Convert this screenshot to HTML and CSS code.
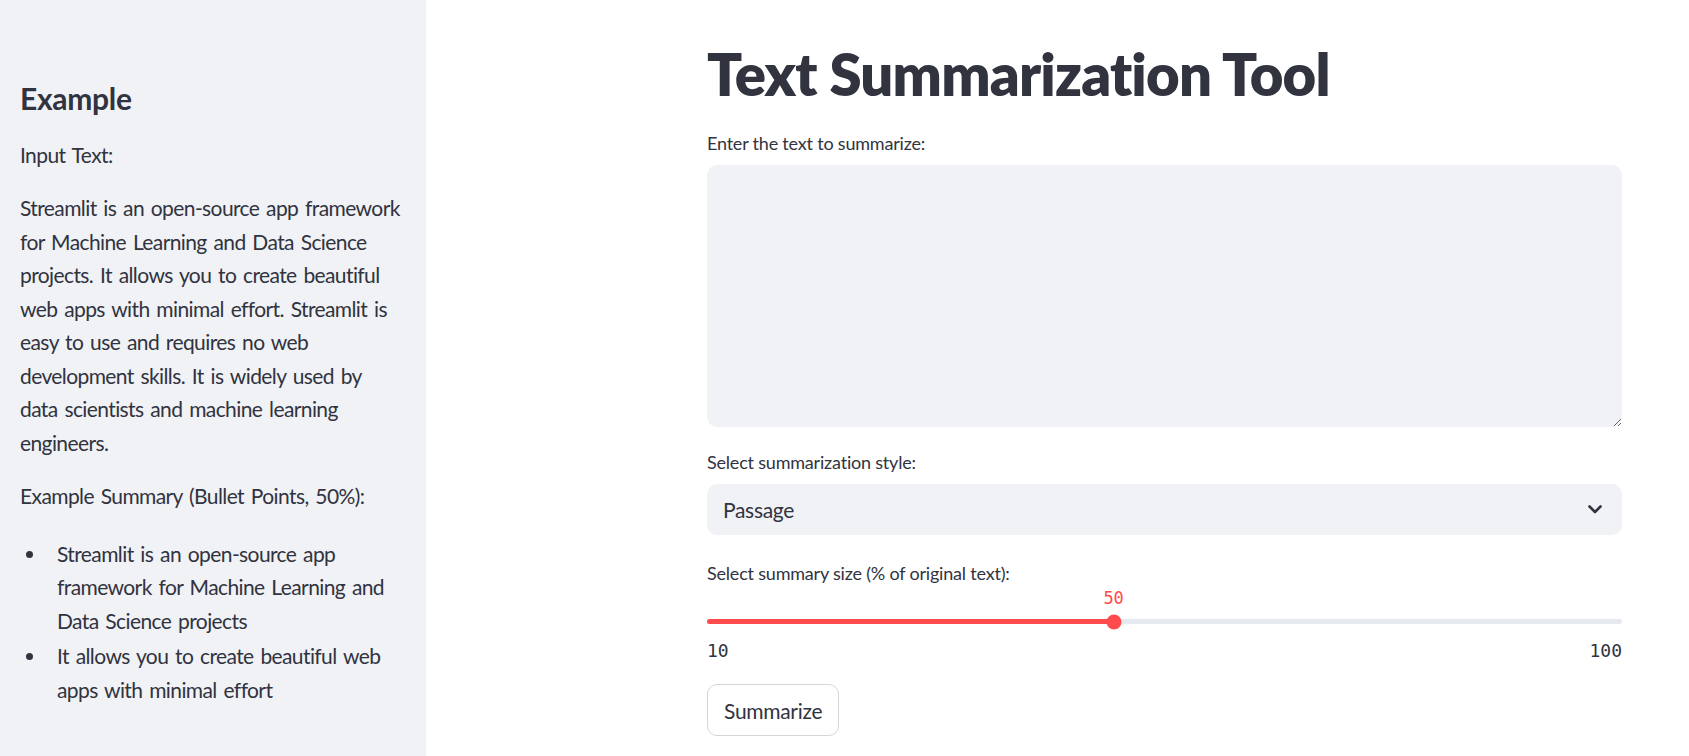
FILE: index.html
```html
<!DOCTYPE html>
<html lang="en">
<head>
<meta charset="utf-8">
<title>Text Summarization Tool</title>
<link rel="stylesheet" href="styles.css">
</head>
<body>
<div class="app">
  <aside class="sidebar">
    <h3 class="side-title">Example</h3>
    <p>Input Text:</p>
    <p>Streamlit is an open-source app framework for Machine Learning and Data Science projects. It allows you to create beautiful web apps with minimal effort. Streamlit is easy to use and requires no web development skills. It is widely used by data scientists and machine learning engineers.</p>
    <p>Example Summary (Bullet Points, 50%):</p>
    <ul class="bullets">
      <li>Streamlit is an open-source app framework for Machine Learning and Data Science projects</li>
      <li>It allows you to create beautiful web apps with minimal effort</li>
    </ul>
  </aside>
  <main class="main">
    <div class="block">
      <h1 class="title">Text Summarization Tool</h1>
      <label class="label">Enter the text to summarize:</label>
      <textarea class="textarea"></textarea>
      <label class="label label-select">Select summarization style:</label>
      <div class="select">
        <span>Passage</span>
        <svg class="chev" width="14" height="9" viewBox="0 0 14 9"><path d="M1.5 1.5 L7 7 L12.5 1.5" fill="none" stroke="#31333f" stroke-width="2.6" stroke-linecap="round" stroke-linejoin="round"/></svg>
      </div>
      <label class="label label-slider">Select summary size (% of original text):</label>
      <div class="slider">
        <div class="slider-value-row"><span class="slider-value" style="left: 44.44%">50</span></div>
        <div class="track">
          <div class="fill" style="width: 44.44%"></div>
          <div class="thumb" style="left: 44.44%"></div>
        </div>
        <div class="ticks"><span>10</span><span>100</span></div>
      </div>
      <button class="btn" type="button">Summarize</button>
    </div>
  </main>
</div>
</body>
</html>
```
FILE: styles.css
```css
* { box-sizing: border-box; }
html, body { margin: 0; padding: 0; }
body {
  font-family: "Lato", "Roboto", sans-serif;
  color: #31333f;
  background: #ffffff;
}
.app {
  display: flex;
  height: 756px;
  overflow: hidden;
}
.sidebar {
  width: 426px;
  flex: 0 0 426px;
  background: #f0f2f6;
  padding: 76px 21.5px 0 20px;
  font-size: 21px;
  line-height: 33.5px;
  letter-spacing: -0.6px;
  word-spacing: 2px;
}
.side-title {
  font-size: 30px;
  font-weight: 700;
  line-height: 44px;
  margin: 0 0 17.5px 0;
  letter-spacing: -0.3px;
  word-spacing: 0;
}
.sidebar p { margin: 0 0 20px 0; }
.bullets {
  list-style: none;
  margin: 24px 0 0 0;
  padding-left: 37px;
}
.bullets li {
  position: relative;
  margin-bottom: 2px;
}
.bullets li::before {
  content: "";
  position: absolute;
  left: -31px;
  top: 14px;
  width: 7px;
  height: 7px;
  border-radius: 50%;
  background: #31333f;
}
.main {
  flex: 1;
  min-width: 0;
}
.block {
  width: 915px;
  margin-left: 281px;
  padding-top: 38px;
}
.title {
  font-size: 58px;
  font-weight: 800;
  line-height: 72px;
  margin: 0 0 21px 0;
  letter-spacing: -0.8px;
}
.label {
  display: block;
  font-size: 18px;
  line-height: 24px;
  margin-bottom: 10px;
  letter-spacing: -0.2px;
}
.textarea {
  display: block;
  width: 100%;
  height: 262px;
  margin-top: 2px;
  background: #f0f2f6;
  border: none;
  border-radius: 10px;
  resize: vertical;
  outline: none;
  font-family: inherit;
  font-size: 21px;
  padding: 16px;
}
.label-select { margin-top: 23px; }
.select {
  height: 51px;
  background: #f0f2f6;
  border-radius: 10px;
  display: flex;
  align-items: center;
  justify-content: space-between;
  padding: 0 20px 0 16px;
  font-size: 21px;
  letter-spacing: -0.3px;
}
.label-slider { margin-top: 26px; margin-bottom: 2px; }
.slider { position: relative; }
.slider-value-row {
  position: relative;
  height: 26px;
}
.slider-value {
  position: absolute;
  top: 0;
  transform: translateX(-50%);
  color: #ff4b4b;
  font-family: "DejaVu Sans Mono", "Liberation Mono", monospace;
  font-size: 17px;
  line-height: 22px;
}
.track {
  position: relative;
  height: 5px;
  background: #e6e9ef;
  border-radius: 3px;
  margin-top: 6px;
}
.fill {
  height: 100%;
  background: #ff4b4b;
  border-radius: 3px;
}
.thumb {
  position: absolute;
  top: 50%;
  width: 15px;
  height: 15px;
  border-radius: 50%;
  background: #ff4b4b;
  transform: translate(-50%, -50%);
}
.ticks {
  display: flex;
  justify-content: space-between;
  font-family: "DejaVu Sans Mono", "Liberation Mono", monospace;
  font-size: 18px;
  line-height: 22px;
  margin-top: 16px;
}
.btn {
  margin-top: 22px;
  height: 52px;
  padding: 0 16px;
  background: #ffffff;
  border: 1px solid #d6d6d9;
  border-radius: 10px;
  font-family: inherit;
  font-size: 21px;
  color: #31333f;
  letter-spacing: -0.3px;
}
```
